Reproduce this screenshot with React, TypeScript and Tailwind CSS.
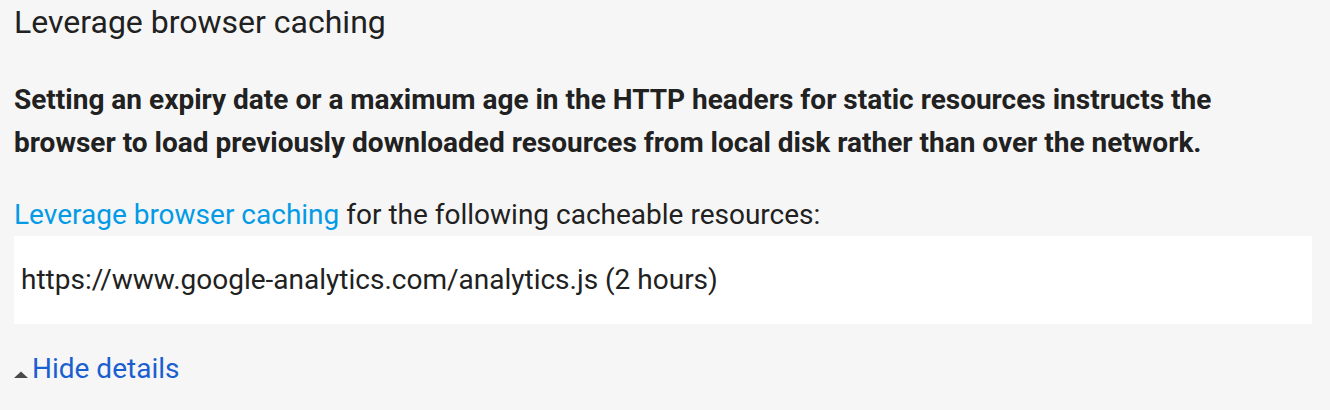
export default function App() {
  return (
    <div className="min-h-[410px] w-[1330px] bg-[#f6f6f6] px-[14px] text-[#212121] font-['Roboto',sans-serif]">
      <h2 className="pt-[2px] text-[32px] leading-[40px] font-normal">Leverage browser caching</h2>
      <p className="mt-[36px] text-[28px] leading-[43px] font-bold">
        Setting an expiry date or a maximum age in the HTTP headers for static resources instructs the
        browser to load previously downloaded resources from local disk rather than over the network.
      </p>
      <p className="mt-[31px] text-[28px] leading-[40px]">
        <a href="#" className="text-[#039be5]">Leverage browser caching</a> for the following cacheable resources:
      </p>
      <div className="mt-[1px] w-[1298px] h-[88px] bg-white flex items-center px-[7px]">
        <span className="text-[28px]">https://www.google-analytics.com/analytics.js (2 hours)</span>
      </div>
      <div className="mt-[29px] flex items-baseline h-[32px]">
        <svg width="14" height="7" viewBox="0 0 14 7" className="mr-[4px] mb-[1px]">
          <polygon points="7,0.5 14,7 0,7" fill="#4a4a4a" />
        </svg>
        <a href="#" className="text-[#1a5fd0] text-[28px] leading-[32px]">Hide details</a>
      </div>
    </div>
  );
}
